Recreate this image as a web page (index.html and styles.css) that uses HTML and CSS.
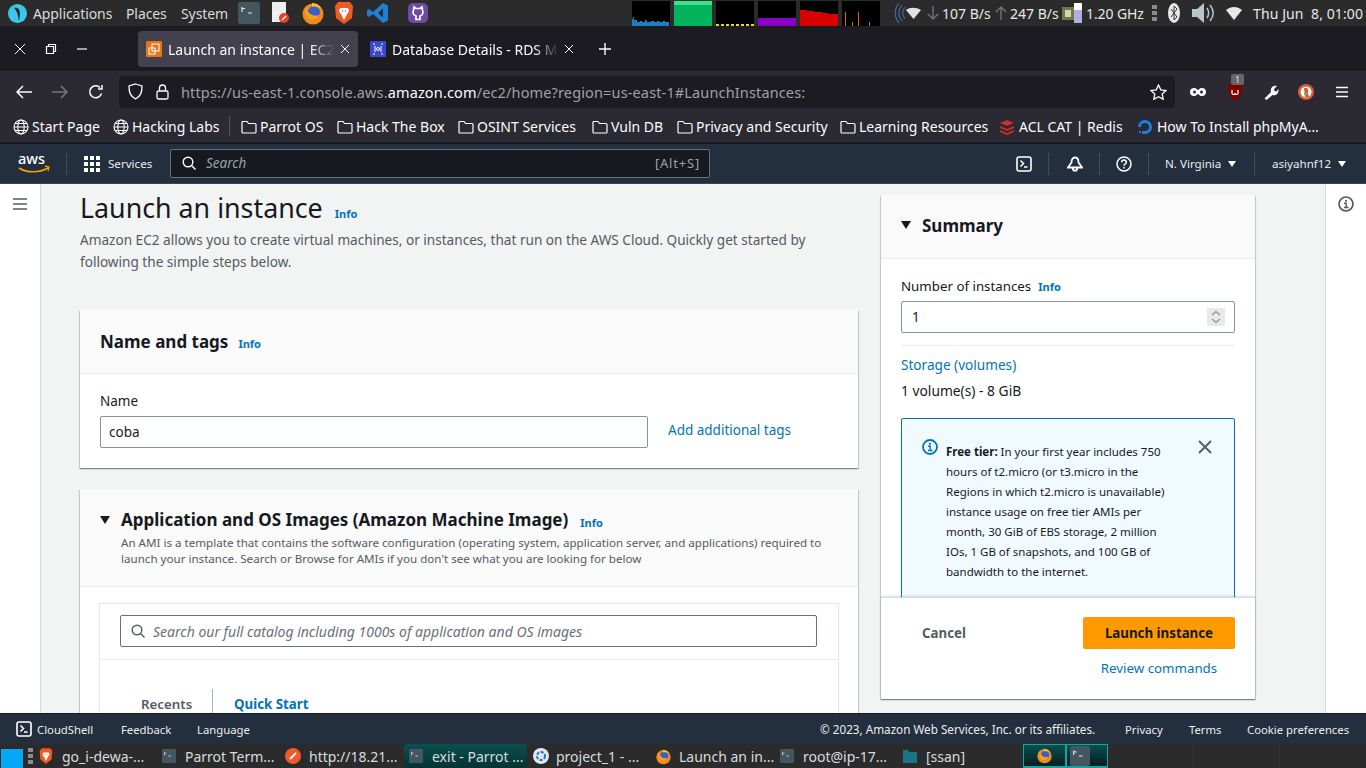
FILE: index.html
```html
<!DOCTYPE html>
<html lang="en">
<head>
<meta charset="utf-8">
<title>Launch an instance | EC2</title>
<link rel="stylesheet" href="styles.css">
</head>
<body>
<svg class="defs" width="0" height="0">
  <symbol id="globe" viewBox="0 0 16 16"><g fill="none" stroke="#fbfbfe" stroke-width="1.1"><circle cx="8" cy="8" r="7"/><ellipse cx="8" cy="8" rx="3.2" ry="7"/><path d="M1 8h14M2 4.5h12M2 11.5h12"/></g></symbol>
  <symbol id="folder" viewBox="0 0 16 16"><path d="M1 3.5a1 1 0 0 1 1-1h4l1.5 2H14a1 1 0 0 1 1 1V13a1 1 0 0 1-1 1H2a1 1 0 0 1-1-1z" fill="none" stroke="#fbfbfe" stroke-width="1.2"/></symbol>
  <symbol id="term" viewBox="0 0 22 22"><rect width="22" height="22" rx="2" fill="#44565f"/><path d="M4 5v5M7 6.5H4.5M10 11h4" stroke="#dfe6e8" stroke-width="1.2" fill="none"/></symbol>
  <symbol id="brave" viewBox="0 0 20 24"><path d="M4 1h12l3 4-1 12-8 6-8-6L1 5z" fill="#f15a22"/><path d="M6 7h8l1 3-3 5-2 4-2-4-3-5z" fill="#fff"/><path d="M8 10h1M11 10h1" stroke="#f15a22" stroke-width="1.4"/></symbol>
  <symbol id="firefox" viewBox="0 0 22 24"><circle cx="11" cy="13" r="10.5" fill="#f08a1d"/><circle cx="12" cy="11" r="6" fill="#3a5fc8"/><path d="M4 6c2 7 7 10 13 8-2 5-9 6-12 2C3 13 3 9 4 6z" fill="#f7a11a"/><path d="M10 2c4 0 8 2 9 6-3-2-6-3-9-2z" fill="#f5c518"/></symbol>
  <symbol id="cshell" viewBox="0 0 16 16"><rect x="1" y="1" width="14" height="14" rx="2" fill="none" stroke="#fff" stroke-width="1.6"/><path d="M4.5 4.5 7.5 7.5 4.5 10.5M8 11h3.5" fill="none" stroke="#fff" stroke-width="1.5"/></symbol>
</svg>

<header class="panel">
  <svg class="p-logo" width="19" height="19" viewBox="0 0 19 19"><circle cx="9.5" cy="9.5" r="9.5" fill="#3bc7e8"/><path d="M6 4c4-1 6 2 6 6l-1 7c-1-5-1-9-5-13z" fill="#13262c"/></svg>
  <nav class="p-menu"><span class="m1">Applications</span><span class="m2">Places</span><span class="m3">System</span></nav>
  <svg class="l-term" width="22" height="22"><use href="#term"/></svg>
  <svg class="l-note" width="18" height="22" viewBox="0 0 18 22"><path d="M0 0h14v20H0z" fill="#eee"/><circle cx="12" cy="16" r="5" fill="#e8402e"/><path d="M10 18l4-4" stroke="#fff" stroke-width="1.4"/></svg>
  <svg class="l-ff" width="22" height="24"><use href="#firefox"/></svg>
  <svg class="l-brave" width="20" height="24"><use href="#brave"/></svg>
  <svg class="l-code" width="22" height="22" viewBox="0 0 22 22"><path d="M16 1l5 2.500v15L16 21 6 12l-4 3-2-1.500V8.500L2 7l4 3zM16 6.500 11 11l5 4.500z" fill="#1f7fd1"/></svg>
  <svg class="l-git" width="20" height="20" viewBox="0 0 20 20"><rect width="20" height="20" rx="5" fill="#6e4aa8"/><path d="M6 4l2 1.500h4L14 4l.5 3c1 2.500.5 5-2.500 6v3.500H8V13c-3-1-3.500-3.500-2.500-6z" fill="none" stroke="#fff" stroke-width="1.700"/></svg>
  <div class="monitors">
    <div class="mon"><svg width="38" height="25" viewBox="0 0 38 25"><path d="M0 25V18h1v-2h1v3h3v2h3v-1h2v1h3v-2h2v2h4v-1h3v1h3v-1h2v1h4v-1h2v1h4v4z" fill="#1b7fc4"/></svg></div>
    <div class="mon"><i class="b-green"></i></div>
    <div class="mon"><i class="b-yellow"></i></div>
    <div class="mon"><i class="b-purple"></i></div>
    <div class="mon"><svg width="38" height="25" viewBox="0 0 38 25"><path d="M0 25V9h7v1h7v1h8v1h6v1h10v12z" fill="#d90000"/></svg></div>
    <div class="mon"><svg width="38" height="25" viewBox="0 0 38 25"><path d="M3 25V11h1v14zM10 25v-4h1v4zM16 25V11h1v14zM27 25v-4h1v4z" fill="#d66a14"/></svg></div>
  </div>
  <svg class="s-wifi" width="30" height="22" viewBox="0 0 30 22"><path d="M5 1C0 7 0 15 5 21M8 3C4 8 4 14 8 19M11 5C8 9 8 13 11 17" fill="none" stroke="#3f6ea0" stroke-width="1.100"/><path d="M12 8c4-3 10-3 15 0l-7.500 9z" fill="#dfe4e6"/></svg>
  <svg class="s-arrow" width="14" height="16" viewBox="0 0 14 16"><path d="M7 1v13M2 9l5 5 5-5" fill="none" stroke="#6c7073" stroke-width="1.500"/></svg>
  <span class="s-rate r1">107 B/s</span>
  <svg class="s-arrow" width="14" height="16" viewBox="0 0 14 16"><path d="M7 15V2M2 7l5-5 5 5" fill="none" stroke="#6c7073" stroke-width="1.500"/></svg>
  <span class="s-rate r2">247 B/s</span>
  <svg class="s-cpu" width="21" height="22" viewBox="0 0 21 22"><rect x="1" y="5" width="12" height="13" fill="#6d7a4a"/><rect x="4" y="8" width="6" height="7" fill="#cfd6b0"/><rect x="13" y="1" width="8" height="20" fill="#fff"/><rect x="13" y="8" width="8" height="13" fill="#b3aee0"/></svg>
  <span class="s-rate r3">1.20 GHz</span>
  <span class="s-handle"><i></i><i></i><i></i></span>
  <svg class="s-bt" width="12" height="20" viewBox="0 0 12 20"><ellipse cx="6" cy="10" rx="6" ry="10" fill="#e8e8e8"/><path d="M3 6l6 8-3 3V3l3 3-6 8" fill="none" stroke="#333" stroke-width="1"/></svg>
  <svg class="s-vol" width="24" height="22" viewBox="0 0 24 22"><path d="M0 7h5l7-6v20l-7-6H0z" fill="#b9c4ca"/><path d="M15 6c2 3 2 7 0 10M18 3c4 5 4 11 0 16" fill="none" stroke="#b9c4ca" stroke-width="1.500"/></svg>
  <svg class="s-net" width="16" height="13" viewBox="0 0 16 13"><path d="M0 3c5-4 11-4 16 0L8 13z" fill="#e8e8e8"/></svg>
  <span class="s-clock">Thu Jun&nbsp; 8, 01:00</span>
</header>

<div class="tabbar">
  <div class="wctl">
    <svg width="12" height="12" viewBox="0 0 12 12"><path d="M1 1l10 10M11 1 1 11" stroke="#fbfbfe" stroke-width="1"/></svg>
    <svg width="12" height="12" viewBox="0 0 12 12"><path d="M1.500 3.500h7v7h-7zM3.500 3.500v-2h7v7h-2" fill="none" stroke="#fbfbfe" stroke-width="1.200"/></svg>
    <svg width="12" height="12" viewBox="0 0 12 12"><path d="M1 6h10" stroke="#fbfbfe" stroke-width="1.200"/></svg>
  </div>
  <div class="tab active">
    <svg class="fav" width="16" height="16" viewBox="0 0 16 16"><rect width="16" height="16" rx="1" fill="#e8741a"/><rect x="6" y="3" width="7" height="7" fill="none" stroke="#fff" stroke-width="1"/><rect x="3" y="7" width="6" height="6" fill="none" stroke="#fff" stroke-width="1"/></svg>
    <span class="tab-t">Launch an instance | EC2 Management Console</span>
    <svg class="tab-x" width="10" height="10" viewBox="0 0 10 10"><path d="M1 1l8 8M9 1 1 9" stroke="#fbfbfe"/></svg>
  </div>
  <div class="tab">
    <svg class="fav" width="16" height="16" viewBox="0 0 16 16"><rect width="16" height="16" rx="1" fill="#3b48cc"/><path d="M5 5v6M11 5v6M3 3h2M11 3h2M3 13h2M11 13h2" stroke="#fff"/><circle cx="8" cy="8" r="1.500" fill="none" stroke="#fff"/></svg>
    <span class="tab-t">Database Details - RDS Management Console</span>
    <svg class="tab-x" width="10" height="10" viewBox="0 0 10 10"><path d="M1 1l8 8M9 1 1 9" stroke="#fbfbfe"/></svg>
  </div>
  <svg class="newtab" width="12" height="12" viewBox="0 0 12 12"><path d="M6 0v12M0 6h12" stroke="#fbfbfe" stroke-width="1.400"/></svg>
</div>

<div class="navbar">
  <svg class="n-back" width="16" height="14" viewBox="0 0 16 14"><path d="M7 1 1 7l6 6M1 7h15" fill="none" stroke="#fbfbfe" stroke-width="1.500"/></svg>
  <svg class="n-fwd" width="16" height="14" viewBox="0 0 16 14"><path d="M9 1l6 6-6 6M15 7H0" fill="none" stroke="#77767d" stroke-width="1.500"/></svg>
  <svg class="n-rel" width="16" height="16" viewBox="0 0 16 16"><path d="M13.500 9.500A6 6 0 1 1 12 3.500M14 1v4h-4" fill="none" stroke="#fbfbfe" stroke-width="1.500"/></svg>
  <div class="urlbar">
    <svg class="u-shield" width="15" height="17" viewBox="0 0 15 17"><path d="M7.500 1 14 3c0 6-1 10-6.500 13C2 13 1 9 1 3z" fill="none" stroke="#fbfbfe" stroke-width="1.300"/></svg>
    <svg class="u-lock" width="13" height="16" viewBox="0 0 13 16"><rect x="1" y="7" width="11" height="8" rx="1.500" fill="none" stroke="#fbfbfe" stroke-width="1.300"/><path d="M3.500 7V4a3 3 0 0 1 6 0v3" fill="none" stroke="#fbfbfe" stroke-width="1.300"/></svg>
    <span class="u-text">https://us-east-1.console.aws.<b>amazon.com</b>/ec2/home?region=us-east-1#LaunchInstances:</span>
    <svg class="u-star" width="17" height="16" viewBox="0 0 17 16"><path d="M8.500 1l2.300 4.800 5.200.7-3.800 3.600 1 5.200-4.700-2.600-4.700 2.600 1-5.200L1 6.500l5.200-.7z" fill="none" stroke="#fbfbfe" stroke-width="1.300"/></svg>
  </div>
  <svg class="x-mask" width="16" height="10" viewBox="0 0 16 10"><path d="M4 1c3 0 3 2 4 2s1-2 4-2c2.500 0 4 1.500 4 4s-1.500 4-4 4c-3 0-3-2-4-2s-1 2-4 2C1.500 9 0 7.500 0 5s1.500-4 4-4z" fill="#fbfbfe"/><circle cx="4.500" cy="5" r="1.500" fill="#2b2a33"/><circle cx="11.500" cy="5" r="1.500" fill="#2b2a33"/></svg>
  <span class="x-ub"><svg width="14" height="18" viewBox="0 0 14 18"><path d="M7 0l7 2c0 7-1 12-7 16C1 14 0 9 0 2z" fill="#800000"/><path d="M4 7v3a1.500 1.500 0 0 0 3 0 1.500 1.500 0 0 0 3 0V7" fill="none" stroke="#fff" stroke-width="1.200"/></svg><em class="badge">1</em></span>
  <svg class="x-wr" width="16" height="16" viewBox="0 0 16 16"><path d="M1.500 14.500 8 8c-1-3 1-7 6-6l-3 3 .5 2 2 .5 2-2.500c.5 5-3 7-6 6l-6 5z" fill="#fbfbfe"/></svg>
  <svg class="x-ddg" width="16" height="16" viewBox="0 0 16 16"><circle cx="8" cy="8" r="8" fill="#de5833"/><circle cx="8" cy="8" r="5.500" fill="#fff"/><path d="M6 4c3-1 5 1 4 4l1 5H7z" fill="#de5833"/><path d="M6 9h4v2H6z" fill="#65bc46"/></svg>
  <svg class="x-menu" width="14" height="12" viewBox="0 0 14 12"><path d="M1 1.500h12M1 6h12M1 10.500h12" stroke="#fbfbfe" stroke-width="1.400"/></svg>
</div>

<div class="bookmarks">
  <a class="bm w1"><svg width="16" height="16"><use href="#globe"/></svg>Start Page</a>
  <a class="bm w2"><svg width="16" height="16"><use href="#globe"/></svg>Hacking Labs</a>
  <i class="bm-sep"></i>
  <a class="bm w3"><svg width="16" height="16"><use href="#folder"/></svg>Parrot OS</a>
  <a class="bm w4"><svg width="16" height="16"><use href="#folder"/></svg>Hack The Box</a>
  <a class="bm w5"><svg width="16" height="16"><use href="#folder"/></svg>OSINT Services</a>
  <a class="bm w6"><svg width="16" height="16"><use href="#folder"/></svg>Vuln DB</a>
  <a class="bm w7"><svg width="16" height="16"><use href="#folder"/></svg>Privacy and Security</a>
  <a class="bm w8"><svg width="16" height="16"><use href="#folder"/></svg>Learning Resources</a>
  <a class="bm w9"><svg width="16" height="16" viewBox="0 0 16 16"><path d="M8 1l7 3-7 3-7-3zM1 7l7 3 7-3v2l-7 3-7-3zM1 11l7 3 7-3v2l-7 3-7-3z" fill="#c6302b"/></svg>ACL CAT | Redis</a>
  <a class="bm w10"><svg width="16" height="16" viewBox="0 0 16 16"><path d="M8 15a7 7 0 1 0-7-7h3a4 4 0 1 1 4 4z" fill="#1a7fe8"/><path d="M5 12h3v3H5zM2 12h2v2H2z" fill="#1a7fe8"/></svg>How To Install phpMyA…</a>
</div>

<div class="aws-head">
  <svg class="aws-logo" width="32" height="22" viewBox="0 0 32 22"><text x="0" y="11" class="aws-word">aws</text><path d="M1 15c8 5 20 5 29 0" fill="none" stroke="#f90" stroke-width="1.700"/><path d="M27 13l4 1-1 4" fill="none" stroke="#f90" stroke-width="1.300"/></svg>
  <i class="h-sep s0"></i>
  <svg class="grid9" width="16" height="16" viewBox="0 0 16 16"><path d="M0 0h4v4H0zM6 0h4v4H6zM12 0h4v4h-4zM0 6h4v4H0zM6 6h4v4H6zM12 6h4v4h-4zM0 12h4v4H0zM6 12h4v4H6zM12 12h4v4h-4z" fill="#fff"/></svg>
  <span class="services">Services</span>
  <div class="aws-search">
    <svg width="14" height="14" viewBox="0 0 14 14"><circle cx="6" cy="6" r="4.800" fill="none" stroke="#fff" stroke-width="1.400"/><path d="M9.500 9.500 13.500 13.500" stroke="#fff" stroke-width="1.400"/></svg>
    <em>Search</em><span>[Alt+S]</span>
  </div>
  <svg class="h-ic1" width="16" height="16"><use href="#cshell"/></svg>
  <i class="h-sep"></i>
  <svg class="h-ic2" width="16" height="16" viewBox="0 0 16 16"><path d="M8 1.500c2.500 0 3.500 2.500 3.500 5L15 11.500H1l3.500-5c0-2.500 1-5 3.500-5zM5.800 12.500a2.200 2.200 0 0 0 4.400 0" fill="none" stroke="#fff" stroke-width="1.800"/></svg>
  <i class="h-sep"></i>
  <svg class="h-ic3" width="16" height="16" viewBox="0 0 16 16"><circle cx="8" cy="8" r="7" fill="none" stroke="#fff" stroke-width="1.500"/><path d="M5.700 6.200c0-3 4.600-3 4.600 0 0 1.800-2.300 1.800-2.300 3.500M8 11v1.500" fill="none" stroke="#fff" stroke-width="1.500"/></svg>
  <i class="h-sep"></i>
  <span class="h-menu reg">N. Virginia<b></b></span>
  <i class="h-sep"></i>
  <span class="h-menu usr">asiyahnf12<b></b></span>
</div>

<main class="main">
  <aside class="rail-l">
    <svg width="14" height="12" viewBox="0 0 14 12"><path d="M0 1h14M0 6h14M0 11h14" stroke="#545b64" stroke-width="1.700"/></svg>
  </aside>
  <div class="content">
    <section class="col-left">
      <div class="page-h"><h1>Launch an instance</h1><a class="info">Info</a></div>
      <p class="lead">Amazon EC2 allows you to create virtual machines, or instances, that run on the AWS Cloud. Quickly get started by following the simple steps below.</p>

      <div class="card c-name">
        <div class="card-h"><h2>Name and tags</h2><a class="info">Info</a></div>
        <div class="card-b">
          <label class="lbl">Name</label>
          <div class="name-row">
            <div class="input name-in">coba</div>
            <a class="link add">Add additional tags</a>
          </div>
        </div>
      </div>

      <div class="card c-ami">
        <div class="card-h ami-h">
          <div class="ami-title"><b class="caret"></b><h2>Application and OS Images (Amazon Machine Image)</h2><a class="info">Info</a></div>
          <p>An AMI is a template that contains the software configuration (operating system, application server, and applications) required to launch your instance. Search or Browse for AMIs if you don't see what you are looking for below</p>
        </div>
        <div class="ami-b">
          <div class="inner">
            <div class="inner-top">
              <div class="input ami-s">
                <svg width="14" height="14" viewBox="0 0 14 14"><circle cx="6" cy="6" r="4.800" fill="none" stroke="#545b64" stroke-width="1.400"/><path d="M9.500 9.500 13.500 13.500" stroke="#545b64" stroke-width="1.400"/></svg>
                <em>Search our full catalog including 1000s of application and OS images</em>
              </div>
            </div>
            <div class="ami-tabs"><span class="t-rec">Recents</span><span class="t-qs">Quick Start</span></div>
          </div>
        </div>
      </div>
    </section>

    <aside class="summary">
      <div class="sum-h"><b class="caret"></b><h2>Summary</h2></div>
      <div class="sum-b">
        <div class="sum-top">
          <div class="lbl-row"><label>Number of instances</label><a class="info">Info</a></div>
          <div class="input num-in">1<span class="spin"><svg width="10" height="14" viewBox="0 0 10 14"><path d="M1 5l4-3.500L9 5M1 9l4 3.500L9 9" fill="none" stroke="#879596" stroke-width="1.200"/></svg></span></div>
          <hr>
        </div>
        <div class="sum-scroll">
          <a class="link storage">Storage (volumes)</a>
          <p class="vol">1 volume(s) - 8 GiB</p>
          <div class="flash">
            <svg class="fl-i" width="16" height="16" viewBox="0 0 16 16"><circle cx="8" cy="8" r="7" fill="none" stroke="#0073bb" stroke-width="1.800"/><circle cx="8" cy="4.800" r="1.100" fill="#0073bb"/><path d="M6 7.300h2.200v4M6 11.500h4.500" fill="none" stroke="#0073bb" stroke-width="1.400"/></svg>
            <p><b>Free tier:</b> In your first year includes 750 hours of t2.micro (or t3.micro in the Regions in which t2.micro is unavailable) instance usage on free tier AMIs per month, 30 GiB of EBS storage, 2 million IOs, 1 GB of snapshots, and 100 GB of bandwidth to the internet.</p>
            <svg class="fl-x" width="14" height="14" viewBox="0 0 14 14"><path d="M1 1l12 12M13 1 1 13" stroke="#545b64" stroke-width="1.800"/></svg>
          </div>
        </div>
      </div>
      <div class="sum-f">
        <div class="act"><span class="cancel">Cancel</span><span class="launch">Launch instance</span></div>
        <a class="link review">Review commands</a>
      </div>
    </aside>
  </div>
  <aside class="rail-r">
    <svg width="16" height="16" viewBox="0 0 16 16"><circle cx="8" cy="8" r="7" fill="none" stroke="#545b64" stroke-width="1.700"/><circle cx="8" cy="4.800" r="1.100" fill="#545b64"/><path d="M6 7.300h2.200v4M6 11.500h4.500" fill="none" stroke="#545b64" stroke-width="1.400"/></svg>
  </aside>
</main>

<footer class="aws-foot">
  <svg width="16" height="16"><use href="#cshell"/></svg>
  <span class="f-cs">CloudShell</span><span class="f-fb">Feedback</span><span class="f-la">Language</span>
  <span class="f-c">© 2023, Amazon Web Services, Inc. or its affiliates.</span>
  <span class="f-pr">Privacy</span><span class="f-te">Terms</span><span class="f-co">Cookie preferences</span>
</footer>

<div class="taskbar">
  <i class="desk"></i>
  <span class="s-handle tb-h"><i></i><i></i><i></i></span>
  <div class="task t1"><svg width="14" height="18"><use href="#brave"/></svg><span>go_i-dewa-...</span></div>
  <div class="task t2"><svg width="14" height="14"><use href="#term"/></svg><span>Parrot Term...</span></div>
  <div class="task t3"><svg width="16" height="16" viewBox="0 0 16 16"><circle cx="8" cy="8" r="8" fill="#ef5a2a"/><path d="M5 11l6-6" stroke="#fff" stroke-width="1.800"/></svg><span>http://18.21...</span></div>
  <div class="task t4 on"><svg width="14" height="14"><use href="#term"/></svg><span>exit - Parrot ...</span></div>
  <div class="task t5"><svg width="16" height="16" viewBox="0 0 16 16"><circle cx="8" cy="8" r="8" fill="#dfe8f5"/><circle cx="8" cy="8" r="4" fill="none" stroke="#2f6fb8" stroke-width="2" stroke-dasharray="3 1.500"/></svg><span>project_1 - ...</span></div>
  <div class="task t6"><svg width="15" height="17"><use href="#firefox"/></svg><span>Launch an in...</span></div>
  <div class="task t7"><svg width="14" height="14"><use href="#term"/></svg><span>root@ip-17...</span></div>
  <div class="task t8"><svg width="14" height="14" viewBox="0 0 14 14"><path d="M0 1h5l1 2h8v11H0z" fill="#1c7487"/></svg><span>[ssan]</span></div>
  <div class="pager">
    <div class="pg pg1"><svg width="15" height="17"><use href="#firefox"/></svg></div>
    <div class="pg pg2"><svg width="26" height="20"><use href="#term"/></svg></div>
    <div class="pg pg3"></div>
    <div class="pg pg3"></div>
  </div>
</div>
</body>
</html>
```
FILE: styles.css
```css
* { box-sizing: border-box; }
html, body { margin: 0; padding: 0; }
body {
  width: 1366px; height: 768px; overflow: hidden;
  display: flex; flex-direction: column;
  font-family: "Noto Sans", "Open Sans", sans-serif;
  background: #1c1b22;
}
.defs { position: absolute; }
i, em, b { font-style: normal; }
h1, h2, p { margin: 0; }
svg { flex: none; display: block; }

/* system panel */
.panel {
  height: 26px; flex: none; background: #2b2b2b; color: #d8dcdf;
  display: flex; align-items: center; font-size: 14px; padding-left: 8px;
  overflow: hidden;
}
.p-menu { display: flex; margin-left: 6px; width: 205px; flex: none; letter-spacing: -.1px; }
.p-menu span { flex: none; }
.m1 { width: 93px; } .m2 { width: 55px; }
.l-note { margin-left: 12px; }
.l-ff { margin-left: 12px; }
.l-brave { margin-left: 10px; }
.l-code { margin-left: 13px; }
.l-git { margin-left: 19px; }
.monitors { display: flex; gap: 4px; margin-left: 204px; height: 26px; padding-top: 1px; flex: none; }
.mon { width: 38px; height: 25px; background: #000; display: flex; align-items: flex-end; }
.mon i { display: block; width: 100%; }
.b-green { height: 25px; background: linear-gradient(#3fe08c 0 4px,#00b35c 4px); }
.b-yellow { height: 2px; background: repeating-linear-gradient(90deg,#e8d91a 0 3px,#000 3px 5px); }
.b-purple { height: 8px; background: #8a00c4; }
.s-wifi { margin-left: 14px; }
.s-arrow { margin-left: 2px; }
.s-rate { flex: none; color: #e6e8ea; }
.r1 { width: 50px; margin-left: 2px; } .r2 { width: 51px; margin-left: 2px; }
.r3 { margin-left: 4px; width: 61px; letter-spacing: -.1px; white-space: nowrap; }
.s-handle { display: flex; flex-direction: column; gap: 2px; width: 5px; flex: none; margin-left: 5px; }
.s-handle i { display: block; height: 4px; background: #8c8c8c; }
.s-bt { margin-left: 11px; }
.s-vol { margin-left: 12px; }
.s-net { margin-left: 10px; }
.s-clock { margin-left: 11px; flex: none; color: #e6e8ea; letter-spacing: .1px; white-space: nowrap; }

/* tab bar */
.tabbar { height: 45px; flex: none; background: #1c1b22; display: flex; align-items: center; color: #fbfbfe; font-size: 14px; }
.wctl { display: flex; gap: 19px; width: 138px; padding-left: 14px; flex: none; }
.tab { width: 220px; height: 36px; margin-top: 1px; border-radius: 4px; display: flex; align-items: center; padding: 0 8px; flex: none; margin-right: 4px; }
.tab.active { background: #42414d; }
.fav { flex: none; }
.tab-t { flex: 1; min-width: 0; margin-left: 6px; white-space: nowrap; overflow: hidden; -webkit-mask-image: linear-gradient(90deg,#000 85%,transparent); mask-image: linear-gradient(90deg,#000 85%,transparent); }
.tab-x { margin-left: 5px; }
.newtab { margin-left: 13px; }

/* nav bar */
.navbar { height: 41px; flex: none; background: #2b2a33; display: flex; align-items: center; }
.n-back { margin-left: 16px; } .n-fwd { margin-left: 20px; } .n-rel { margin-left: 20px; }
.urlbar { width: 1056px; height: 32px; margin-left: 15px; background: #1c1b22; border-radius: 4px; display: flex; align-items: center; padding: 0 8px 0 9px; flex: none; font-size: 14.5px; letter-spacing: .14px; color: #a0a0a8; }
.u-lock { margin-left: 13px; }
.u-text { margin-left: 12px; flex: 1; white-space: nowrap; overflow: hidden; }
.u-text b { color: #fbfbfe; font-weight: 400; }
.x-mask { margin-left: 15px; }
.x-ub { position: relative; margin-left: 22px; width: 14px; height: 18px; flex: none; }
.badge { position: absolute; left: 3px; top: -9px; background: #666; color: #eee; font-size: 8px; line-height: 11px; width: 13px; text-align: center; border-radius: 2px; }
.x-wr { margin-left: 21px; } .x-ddg { margin-left: 19px; } .x-menu { margin-left: 21px; }

/* bookmarks */
.bookmarks { height: 30px; flex: none; background: #2b2a33; display: flex; align-items: center; color: #fbfbfe; font-size: 14px; padding: 0 0 2px 13px; }
.bm { display: flex; align-items: center; gap: 3px; flex: none; white-space: nowrap; }
.bm svg { margin-top: 1px; }
.w1 { width: 100px; } .w2 { width: 116px; }
.bm-sep { width: 1px; height: 20px; background: #55545c; margin-right: 11px; flex: none; }
.w3 { width: 96px; } .w4 { width: 121px; } .w5 { width: 134px; } .w6 { width: 85px; }
.w7 { width: 163px; } .w8 { width: 159px; } .w9 { width: 138px; }
.w9 { gap: 4px; } .w10 { gap: 4px; }

/* aws header */
.aws-head { height: 42px; flex: none; background: #232f3e; border-top: 2px solid #16191f; border-bottom: 1px solid #3a4655; display: flex; align-items: center; color: #eaeded; font-size: 11.600px; padding-left: 18px; }
.aws-logo { overflow: visible; }
.aws-word { font: 500 14.500px "Noto Sans", sans-serif; fill: #fff; }
.h-sep { width: 1px; height: 22px; background: #414d5c; flex: none; margin: 0 16px; }
.h-sep.s0 { margin: 0 17px 0 16px; }
.services { margin-left: 8px; width: 62px; flex: none; }
.aws-search { width: 540px; height: 29px; border: 1px solid #687078; border-radius: 2px; background: #16191f; display: flex; align-items: center; padding: 0 9px 1px 11px; flex: none; font-size: 13.500px; color: #95a5a6; }
.aws-search em { font-style: italic; margin-left: 10px; flex: 1; }
.aws-search span { color: #95a5a6; font-size: 13px; letter-spacing: .8px; }
.h-ic1 { margin-left: 306px; }
.h-ic2 { margin-left: 2px; }
.h-menu { display: flex; align-items: center; flex: none; white-space: pre; }
.h-menu b { width: 0; height: 0; border: 4.500px solid transparent; border-top: 6px solid #fff; border-bottom: 0; margin-left: 7px; margin-right: -2px; }
.reg { width: 73px; } .usr { width: 76px; margin-left: 1px; }

/* main */
.main { height: 529px; flex: none; background: #f2f3f3; display: flex; overflow: hidden; color: #16191f; }
.rail-l { width: 41px; flex: none; background: #fff; border-right: 1px solid #d5dbdb; padding: 14px 0 0 13px; }
.rail-r { width: 41px; flex: none; background: #fff; border-left: 1px solid #d5dbdb; padding: 12px 0 0 12px; }
.content { width: 1284px; flex: none; padding-left: 39px; display: flex; gap: 23px; align-items: flex-start; }
.col-left { width: 778px; flex: none; }
.page-h { display: flex; align-items: center; height: 34px; margin-top: 7px; }
h1 { font-size: 26.800px; font-weight: 400; line-height: 34px; white-space: nowrap; }
.info { color: #0073bb; font-size: 11px; font-weight: 700; }
.page-h .info { margin-left: 12px; margin-top: 10px; }
.lead { font-size: 13.600px; line-height: 22px; color: #545b64; margin-top: 4px; width: 760px; }
.card { background: #fff; box-shadow: 0 1px 1px rgba(0,28,36,.3), 1px 1px 1px rgba(0,28,36,.15), -1px 1px 1px rgba(0,28,36,.15); }
.c-name { margin-top: 37px; height: 158px; }
.card-h { background: #fafafa; border-bottom: 1px solid #eaeded; height: 64px; padding: 0 20px; display: flex; align-items: center; }
h2 { font-size: 17px; font-weight: 700; line-height: 22px; white-space: nowrap; }
.card-h .info { margin-left: 10px; margin-top: 4px; }
.card-b { padding: 17px 20px 0; }
.lbl { display: block; font-size: 13.500px; line-height: 20px; }
.name-row { display: flex; align-items: center; margin-top: 5px; }
.input { background: #fff; border: 1px solid #aab7b8; border-radius: 2px; height: 32px; display: flex; align-items: center; font-size: 13.500px; padding-left: 8px; }
.name-in { width: 548px; border-color: #879596; }
.link { color: #0073bb; font-size: 13.500px; }
.add { margin-left: 20px; margin-top: -4px; }
.c-ami { margin-top: 21px; height: 400px; }
.ami-h { display: block; height: 98px; padding-top: 19px; }
.ami-title { display: flex; align-items: center; height: 24px; }
.caret { width: 0; height: 0; border: 5.500px solid transparent; border-top: 8px solid #16191f; border-bottom: 0; flex: none; }
.ami-title .caret { margin-right: 11px; }
.ami-title .info { margin-left: 12px; }
.ami-h p { font-size: 11.600px; line-height: 16px; color: #545b64; margin: 3px 0 0 21px; }
.ami-b { padding: 17px 20px 0; }
.inner { background: #fff; box-shadow: 0 0 1px 1px #e6e9e9; height: 300px; }
.inner-top { height: 56px; padding: 11px 20px 0; border-bottom: 1px solid #eaeded; }
.ami-s { width: 697px; border-color: #687078; font-size: 14px; color: #687078; padding-left: 10px; }
.ami-s em { font-style: italic; margin-left: 8px; }
.ami-tabs { display: flex; height: 60px; padding-top: 29px; font-size: 13.300px; font-weight: 600; }
.t-rec { width: 113px; padding-left: 41px; border-right: 1px solid #aab7b8; color: #545b64; padding-top: 6px; }
.t-qs { margin-left: 21px; color: #0073bb; font-weight: 700; padding-top: 6px; }

/* summary */
.summary { width: 374px; height: 504px; flex: none; margin-top: 11px; background: #fff; box-shadow: 0 1px 1px rgba(0,28,36,.3), 1px 1px 1px rgba(0,28,36,.15), -1px 1px 1px rgba(0,28,36,.15); display: flex; flex-direction: column; }
.sum-h { height: 64px; flex: none; background: #fafafa; border-bottom: 1px solid #eaeded; display: flex; align-items: center; padding: 0 20px 2px; }
.sum-h .caret { margin-right: 11px; margin-top: -2px; }
.sum-b { height: 338px; flex: none; padding: 0 20px; overflow: hidden; display: flex; flex-direction: column; }
.sum-top { flex: none; }
.lbl-row { display: flex; align-items: center; height: 20px; margin-top: 17px; font-size: 13.300px; }
.lbl-row .info { margin-left: 7px; margin-top: 1px; }
.num-in { margin-top: 5px; border-color: #879596; padding-left: 10px; position: relative; }
.spin { position: absolute; right: 9px; top: 6px; width: 18px; height: 18px; background: #e9e9ed; display: flex; align-items: center; justify-content: center; }
hr { border: 0; border-top: 1px solid #eaeded; margin: 12px 0 0; }
.sum-scroll { flex: 1; overflow: hidden; margin-top: 14px; }
.storage { display: block; line-height: 18px; margin-top: -4px; font-size: 13.600px; }
.vol { font-size: 13.800px; line-height: 20px; margin-top: 7px; }
.flash { background: #f1faff; border: 1px solid #0073bb; border-radius: 2px; margin-top: 17px; height: 220px; display: flex; padding: 20px 0 0 20px; }
.flash p { width: 225px; margin-left: 8px; font-size: 11.500px; line-height: 20px; color: #16191f; padding-top: 3px; flex: none; }
.fl-x { margin: 1px 0 0 27px; }
.sum-f { flex: 1; border-top: 1px solid #d5dbdb; box-shadow: 0 -1px 2px rgba(0,28,36,.15); padding: 19px 20px 0; position: relative; background: #fff; }
.act { display: flex; align-items: center; height: 32px; }
.cancel { width: 182px; padding-left: 21px; font-size: 13.300px; font-weight: 700; color: #545b64; flex: none; }
.launch { width: 152px; height: 32px; background: #ff9900; color: #16191f; font-size: 13.300px; font-weight: 700; display: flex; align-items: center; justify-content: center; border-radius: 2px; flex: none; }
.review { display: block; text-align: center; margin: 10px 0 0 182px; width: 152px; font-size: 13.300px; line-height: 18px; white-space: nowrap; }

/* aws footer */
.aws-foot { height: 31px; flex: none; background: #232f3e; border-top: 1px solid #16191f; display: flex; align-items: center; color: #eaeded; font-size: 11.300px; padding-left: 16px; }
.aws-foot span { flex: none; white-space: nowrap; }
.f-cs { margin-left: 5px; width: 84px; } .f-fb { width: 76px; } .f-la { width: 623px; }
.f-c { width: 305px; font-size: 11.700px; } .f-pr { width: 64px; } .f-te { width: 58px; }

/* taskbar */
.taskbar { height: 24px; flex: none; background: #2b2b2b; color: #d8dcdf; font-size: 14px; display: flex; align-items: center; position: relative; }
.desk { width: 22px; height: 19px; background: #03a9f4; margin-left: 1px; margin-top: 4px; flex: none; }
.tb-h { margin-left: 5px; }
.task { height: 24px; display: flex; align-items: center; flex: none; white-space: nowrap; padding-left: 6px; }
.task span { margin-left: 9px; }
.t1 { width: 123px; } .t2 { width: 123px; } .t3 { width: 125px; }
.t3 span { margin-left: 8px; }
.t4 { width: 123px; padding-left: 5px; border-radius: 3px; background: linear-gradient(#0a4f4f,#053333); }
.t5 { width: 123px; } .t5 span { margin-left: 7px; }
.t6 { width: 124px; } .t6 span { margin-left: 8px; }
.t7 { width: 123px; } .t8 { width: 120px; }
.pager { display: flex; margin-left: 6px; height: 24px; flex: none; }
.pg { width: 43px; height: 24px; border-right: 1px solid #333; display: flex; align-items: center; justify-content: center; }
.pg1, .pg2 { background: linear-gradient(#0a4f4f,#021f1f); border: 1px solid #12a3a3; border-bottom-width: 2px; }
.pg2 { justify-content: flex-start; width: 42px; }
.pg3 { width: 86px; }
```
